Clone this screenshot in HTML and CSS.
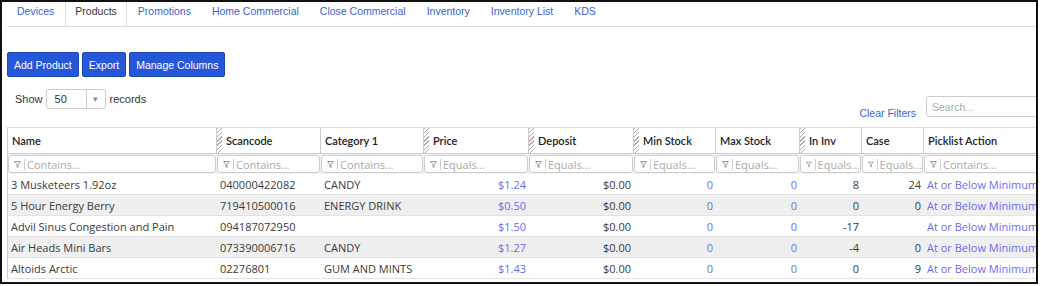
FILE: index.html
```html
<!DOCTYPE html>
<html lang="en">
<head>
    <meta charset="UTF-8">
    <title>Products</title>
    <link rel="stylesheet" href="styles.css">
</head>
<body>
    <div class="frame">
        <!-- Tabs -->
        <ul class="tabs">
            <li><a href="#">Devices</a></li>
            <li class="active"><a href="#">Products</a></li>
            <li><a href="#">Promotions</a></li>
            <li><a href="#">Home Commercial</a></li>
            <li><a href="#">Close Commercial</a></li>
            <li><a href="#">Inventory</a></li>
            <li><a href="#">Inventory List</a></li>
            <li><a href="#">KDS</a></li>
        </ul>

        <!-- Buttons -->
        <div class="toolbar">
            <button class="btn">Add Product</button>
            <button class="btn">Export</button>
            <button class="btn">Manage Columns</button>
        </div>

        <div class="controls">
            <div class="length">
                <span>Show</span>
                <span class="select"><span class="select-value">50</span><span class="select-arrow">&#9662;</span></span>
                <span>records</span>
            </div>
            <div class="controls-right">
                <a class="clear" href="#">Clear Filters</a>
                <input class="search" type="text" placeholder="Search...">
            </div>
        </div>

        <!-- Products grid -->
        <table class="grid">
            <colgroup>
                <col style="width:209px">
                <col style="width:104px">
                <col style="width:103px">
                <col style="width:105px">
                <col style="width:105px">
                <col style="width:82px">
                <col style="width:84px">
                <col style="width:62px">
                <col style="width:62px">
                <col style="width:140px">
            </colgroup>
            <thead>
                <tr class="head-row">
                    <th>Name</th>
                    <th class="resizable">Scancode</th>
                    <th>Category 1</th>
                    <th class="resizable">Price</th>
                    <th class="resizable">Deposit</th>
                    <th class="resizable">Min Stock</th>
                    <th>Max Stock</th>
                    <th class="resizable">In Inv</th>
                    <th>Case</th>
                    <th>Picklist Action</th>
                </tr>
                <tr class="filter-row">
                    <td><div class="filter"><svg class="funnel" width="7" height="7" viewBox="0 0 7 7"><path d="M0.5 0.5H6.5L4 3.5V6.5L3 6V3.5Z"/></svg><span class="sep"></span><span class="ph">Contains...</span></div></td>
                    <td><div class="filter"><svg class="funnel" width="7" height="7" viewBox="0 0 7 7"><path d="M0.5 0.5H6.5L4 3.5V6.5L3 6V3.5Z"/></svg><span class="sep"></span><span class="ph">Contains...</span></div></td>
                    <td><div class="filter"><svg class="funnel" width="7" height="7" viewBox="0 0 7 7"><path d="M0.5 0.5H6.5L4 3.5V6.5L3 6V3.5Z"/></svg><span class="sep"></span><span class="ph">Contains...</span></div></td>
                    <td><div class="filter"><svg class="funnel" width="7" height="7" viewBox="0 0 7 7"><path d="M0.5 0.5H6.5L4 3.5V6.5L3 6V3.5Z"/></svg><span class="sep"></span><span class="ph">Equals...</span></div></td>
                    <td><div class="filter"><svg class="funnel" width="7" height="7" viewBox="0 0 7 7"><path d="M0.5 0.5H6.5L4 3.5V6.5L3 6V3.5Z"/></svg><span class="sep"></span><span class="ph">Equals...</span></div></td>
                    <td><div class="filter"><svg class="funnel" width="7" height="7" viewBox="0 0 7 7"><path d="M0.5 0.5H6.5L4 3.5V6.5L3 6V3.5Z"/></svg><span class="sep"></span><span class="ph">Equals...</span></div></td>
                    <td><div class="filter"><svg class="funnel" width="7" height="7" viewBox="0 0 7 7"><path d="M0.5 0.5H6.5L4 3.5V6.5L3 6V3.5Z"/></svg><span class="sep"></span><span class="ph">Equals...</span></div></td>
                    <td><div class="filter"><svg class="funnel" width="7" height="7" viewBox="0 0 7 7"><path d="M0.5 0.5H6.5L4 3.5V6.5L3 6V3.5Z"/></svg><span class="sep"></span><span class="ph">Equals...</span></div></td>
                    <td><div class="filter"><svg class="funnel" width="7" height="7" viewBox="0 0 7 7"><path d="M0.5 0.5H6.5L4 3.5V6.5L3 6V3.5Z"/></svg><span class="sep"></span><span class="ph">Equals...</span></div></td>
                    <td><div class="filter"><svg class="funnel" width="7" height="7" viewBox="0 0 7 7"><path d="M0.5 0.5H6.5L4 3.5V6.5L3 6V3.5Z"/></svg><span class="sep"></span><span class="ph">Contains...</span></div></td>
                </tr>
            </thead>
            <tbody>
                <tr>
                    <td>3 Musketeers 1.92oz</td>
                    <td>040000422082</td>
                    <td>CANDY</td>
                    <td class="num link">$1.24</td>
                    <td class="num">$0.00</td>
                    <td class="num link">0</td>
                    <td class="num link">0</td>
                    <td class="num">8</td>
                    <td class="num">24</td>
                    <td class="link">At or Below Minimum</td>
                </tr>
                <tr>
                    <td>5 Hour Energy Berry</td>
                    <td>719410500016</td>
                    <td>ENERGY DRINK</td>
                    <td class="num link">$0.50</td>
                    <td class="num">$0.00</td>
                    <td class="num link">0</td>
                    <td class="num link">0</td>
                    <td class="num">0</td>
                    <td class="num">0</td>
                    <td class="link">At or Below Minimum</td>
                </tr>
                <tr>
                    <td>Advil Sinus Congestion and Pain</td>
                    <td>094187072950</td>
                    <td></td>
                    <td class="num link">$1.50</td>
                    <td class="num">$0.00</td>
                    <td class="num link">0</td>
                    <td class="num link">0</td>
                    <td class="num">-17</td>
                    <td class="num"></td>
                    <td class="link">At or Below Minimum</td>
                </tr>
                <tr>
                    <td>Air Heads Mini Bars</td>
                    <td>073390006716</td>
                    <td>CANDY</td>
                    <td class="num link">$1.27</td>
                    <td class="num">$0.00</td>
                    <td class="num link">0</td>
                    <td class="num link">0</td>
                    <td class="num">-4</td>
                    <td class="num">0</td>
                    <td class="link">At or Below Minimum</td>
                </tr>
                <tr>
                    <td>Altoids Arctic</td>
                    <td>02276801</td>
                    <td>GUM AND MINTS</td>
                    <td class="num link">$1.43</td>
                    <td class="num">$0.00</td>
                    <td class="num link">0</td>
                    <td class="num link">0</td>
                    <td class="num">0</td>
                    <td class="num">9</td>
                    <td class="link">At or Below Minimum</td>
                </tr>
            </tbody>
        </table>
    </div>
</body>
</html>
```

FILE: styles.css
```css
/* General */
body {
    margin: 0;
    background-color: #fff;
    font-family: "Liberation Sans", Arial, sans-serif;
    font-size: 10.5px;
    color: #333;
}

.frame {
    width: 1038px;
    height: 284px;
    box-sizing: border-box;
    border: 2px solid #111;
    padding-left: 5px;
    overflow: hidden;
}

/* Tabs */
.tabs {
    display: flex;
    list-style: none;
    margin: 0;
    padding: 0;
    border-bottom: 1px solid #ddd;
}

.tabs li {
    margin-right: 1px;
}

.tabs a {
    display: block;
    padding: 2px 9px 8px;
    line-height: 14px;
    border: 1px solid transparent;
    border-top: 0;
    border-bottom: 0;
    color: #3b5fd8;
    text-decoration: none;
}

.tabs .active a {
    border-color: #ddd;
    color: #333;
}

/* Buttons */
.toolbar {
    display: flex;
    gap: 3px;
    margin-top: 25px;
}

.btn {
    height: 25px;
    padding: 0 6px;
    border: 1px solid #1c47b6;
    border-radius: 2px;
    background-color: #2557d8;
    color: #fff;
    font-family: "Liberation Sans", Arial, sans-serif;
    font-size: 10.5px;
    cursor: pointer;
}

/* Show / search row */
.controls {
    display: flex;
    height: 38px;
    margin-top: 12px;
}

.length {
    display: flex;
    align-items: center;
    height: 20px;
    padding-left: 8px;
    font-size: 11px;
}

.select {
    display: flex;
    width: 60px;
    height: 20px;
    box-sizing: border-box;
    margin: 0 4px 0 3px;
    border: 1px solid #ccc;
    border-radius: 3px;
}

.select-value {
    width: 31px;
    padding: 3px 0 0 8px;
}

.select-arrow {
    flex: 1;
    border-left: 1px solid #ccc;
    color: #888;
    font-size: 9px;
    line-height: 18px;
    text-align: center;
}

.controls-right {
    display: flex;
    align-items: flex-end;
    gap: 10px;
    align-self: flex-end;
    margin: 0 -20px 10px auto;
}

.clear {
    line-height: 14px;
    margin-bottom: -3px;
    color: #3b62db;
    text-decoration: none;
}

.search {
    width: 130px;
    height: 21px;
    box-sizing: border-box;
    padding: 0 5px;
    border: 1px solid #ccc;
    border-radius: 3px;
    font-family: "Liberation Sans", Arial, sans-serif;
    font-size: 10.5px;
}

.search::placeholder {
    color: #aaa;
}

/* Grid */
.grid {
    width: 1056px;
    table-layout: fixed;
    border-collapse: separate;
    border-spacing: 0;
    border-top: 1px solid #ddd;
    border-left: 1px solid #ccc;
    font-family: "Open Sans", sans-serif;
    font-size: 11px;
    color: #3a3a3a;
}

.grid th {
    height: 25px;
    padding: 0 0 0 4px;
    border-right: 1px solid #ccc;
    border-bottom: 1px solid #ccc;
    text-align: left;
    font-family: Lato, sans-serif;
    font-weight: 600;
    color: #222;
    white-space: nowrap;
    overflow: hidden;
}

.grid th.resizable {
    padding-left: 9px;
    background: repeating-linear-gradient(135deg, #aaa 0 1px, #fff 1px 3px) left top / 5px 100% no-repeat;
}

.filter-row td {
    height: 20px;
    padding: 0 1px 0 0;
    background-color: #f4f4f4;
}

.filter {
    display: flex;
    align-items: center;
    height: 18px;
    box-sizing: border-box;
    padding-left: 5px;
    border: 1px solid #ccc;
    border-radius: 3px;
    background-color: #fff;
    overflow: hidden;
    white-space: nowrap;
}

.funnel {
    fill: none;
    stroke: #999;
    stroke-width: 1;
}

.sep {
    width: 1px;
    height: 11px;
    margin: 0 2px 0 3px;
    background-color: #ccc;
}

.ph {
    color: #aaa;
}

.grid tbody td {
    height: 20px;
    padding: 0 3px;
    border-bottom: 1px solid #e3e3e3;
    white-space: nowrap;
    overflow: hidden;
}

.grid tbody tr:nth-child(even) td {
    background-color: #efefef;
}

.grid td.num {
    text-align: right;
}

.grid td.link {
    color: #6b6bef;
}
```
